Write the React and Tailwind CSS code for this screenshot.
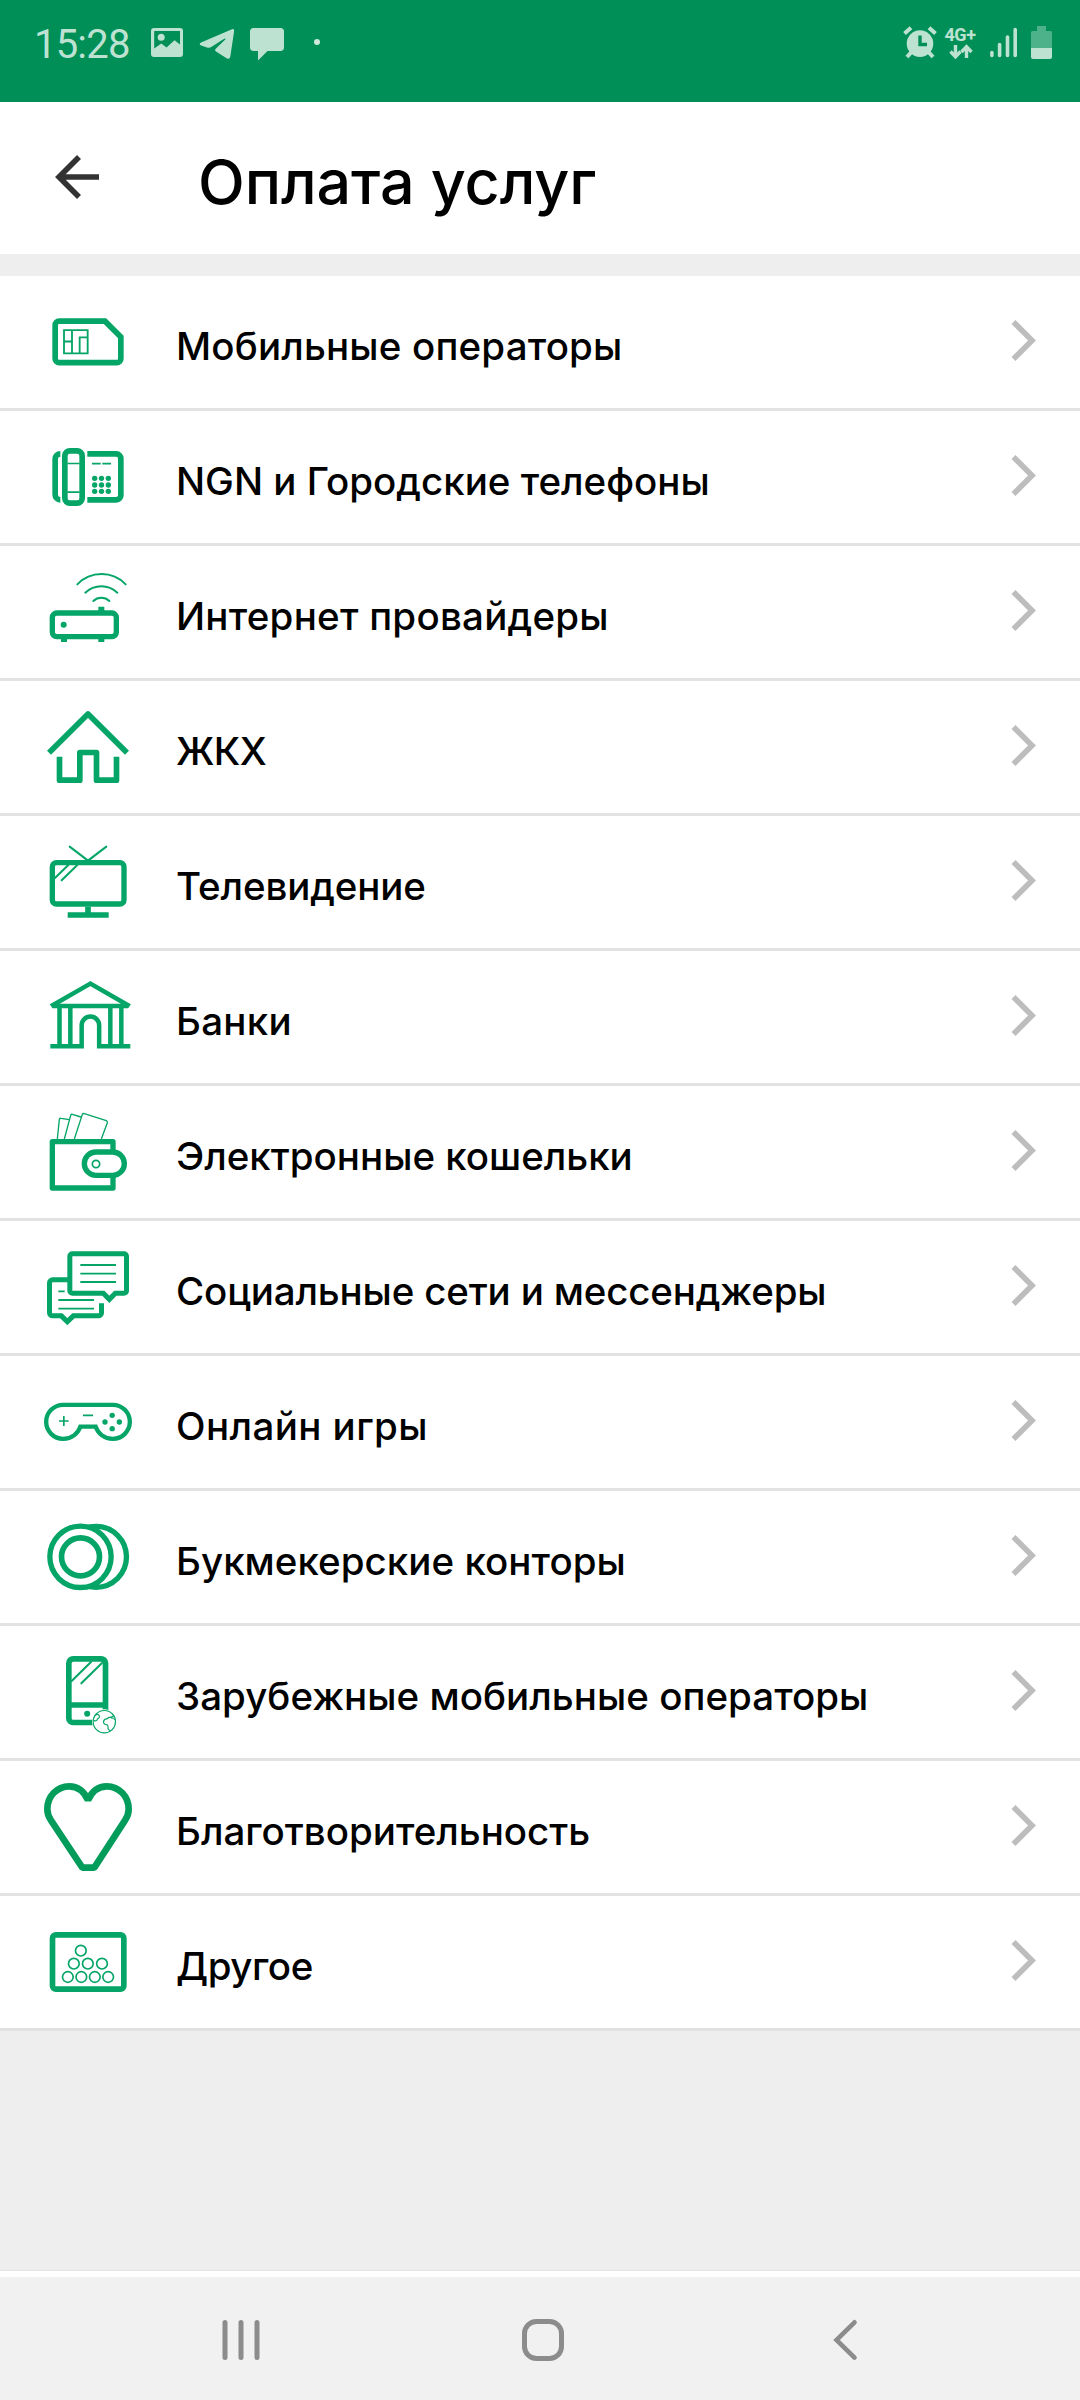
const GREEN = "#04a566";

const services = [
  { label: "Мобильные операторы", Icon: SimIcon, tracking: "tracking-[0.17px]" },
  { label: "NGN и Городские телефоны", Icon: PhoneIcon },
  { label: "Интернет провайдеры", Icon: RouterIcon, tracking: "tracking-[0.24px]" },
  { label: "ЖКХ", Icon: HouseIcon, tracking: "tracking-[-0.5px]" },
  { label: "Телевидение", Icon: TvIcon, tracking: "tracking-[-0.12px]" },
  { label: "Банки", Icon: BankIcon, tracking: "tracking-[0.3px]" },
  { label: "Электронные кошельки", Icon: WalletIcon },
  { label: "Социальные сети и мессенджеры", Icon: ChatsIcon, tracking: "tracking-[-0.16px]" },
  { label: "Онлайн игры", Icon: GamepadIcon, tracking: "tracking-[0.42px]" },
  { label: "Букмекерские конторы", Icon: CoinsIcon, tracking: "tracking-[0.05px]" },
  { label: "Зарубежные мобильные операторы", Icon: MobileGlobeIcon, tracking: "tracking-[0.03px]" },
  { label: "Благотворительность", Icon: HeartIcon },
  { label: "Другое", Icon: OtherIcon, tracking: "tracking-[-0.45px]" },
];

export default function App() {
  return (
    <div className="w-[1080px] h-[2400px] flex flex-col bg-[#eeeeee] font-['Inter',sans-serif] text-black overflow-hidden">
      <StatusBar />
      <Header title="Оплата услуг" />

      <main className="flex-1 pt-[22px] border-b border-[#e2e2e2]">
        {services.map(({ label, Icon, tracking }) => (
          <ServiceRow key={label} label={label} Icon={Icon} tracking={tracking} />
        ))}
      </main>

      <NavBar />
    </div>
  );
}

function Header({ title }) {
  return (
    <header className="h-[152px] shrink-0 bg-white flex items-center pl-[54px]">
      <svg width="46" height="46" viewBox="0 0 46 46" className="shrink-0 -mt-[3px]" fill="none" stroke="#333333" strokeWidth="5.6">
        <path d="M25 3 L5 23 L25 43 M5 23 H45" />
      </svg>
      <h1 className="ml-[98px] mt-[9px] text-[61px] leading-none font-medium tracking-[-0.1px] whitespace-nowrap">
        {title}
      </h1>
    </header>
  );
}

function ServiceRow({ label, Icon, tracking = "tracking-normal" }) {
  return (
    <div className="h-[135px] bg-white border-b-3 border-[#e2e2e2] flex items-center pl-11 pr-[43px]">
      <Icon />
      <span className={`ml-11 mt-[9px] text-[38.5px] leading-none font-medium whitespace-nowrap ${tracking}`}>
        {label}
      </span>
      <svg width="26" height="42" viewBox="0 0 26 42" className="ml-auto -mt-[3px]" fill="none" stroke="#bdbdbd" strokeWidth="5.6">
        <path d="M2.5 2 L21 20.5 L2.5 39" />
      </svg>
    </div>
  );
}

/* ---------- System bars ---------- */

function StatusBar() {
  return (
    <div className="h-[102px] shrink-0 bg-[#008f57] text-[#bde2d2] flex items-start pt-[26px] pl-[34px] pr-7">
      <span className="w-[117px] mt-[-1px] font-['Roboto',sans-serif] text-[40px] leading-[40px] tracking-[-0.8px]">
        15:28
      </span>

      <svg width="32" height="34" viewBox="0 0 32 34" fill="currentColor">
        <path
          fillRule="evenodd"
          d="M3 2 H29 A3 3 0 0 1 32 5 V28 A3 3 0 0 1 29 31 H3 A3 3 0 0 1 0 28 V5 A3 3 0 0 1 3 2 Z M3.2 5 V22.5 L10.3 17.5 L15.5 21.5 L23.5 14.3 L29 18.5 V5 Z"
        />
        <circle cx="10.2" cy="11.2" r="3.5" />
      </svg>
      <svg width="35" height="35" viewBox="0 0 35 35" className="ml-4" fill="currentColor">
        <path d="M33 3.2 Q35.3 2.4 35.2 4.8 L31.3 30.5 Q30.6 34 27.6 32.2 L17 25.6 Q15.4 24.4 16.7 22.8 L26.5 13.3 Q26.8 12 25.2 12.8 L12.6 20.8 Q10.5 22.2 8 21.4 L2.2 19.6 Q-0.6 18.5 2 16.6 Z" />
      </svg>
      <svg width="34" height="36" viewBox="0 0 34 36" className="ml-4" fill="currentColor">
        <path d="M3.5 2 H30.5 A3.3 3.3 0 0 1 34 5.5 V21.5 A3.3 3.3 0 0 1 30.5 25 H17.5 L8 34.5 V25 H3.5 A3.3 3.3 0 0 1 0 21.5 V5.5 A3.3 3.3 0 0 1 3.5 2 Z" />
      </svg>
      <span className="ml-[30px] mt-[13px] size-[6px] rounded-full bg-[#cdeadd]" />

      <svg width="34" height="34" viewBox="0 0 34 34" className="ml-auto" fill="none" stroke="currentColor">
        <circle cx="17" cy="17.6" r="13.3" fill="currentColor" stroke="none" />
        <path d="M1.5 7.5 L8 1.8 M32.5 7.5 L26 1.8" strokeWidth="4" />
        <path d="M8.5 26 L4 31 M25.5 26 L30 31" strokeWidth="4" />
        <path d="M17 9.5 V18.5 H24" stroke="#008f57" strokeWidth="3.4" />
      </svg>
      <div className="ml-[7px] mr-px w-8 flex flex-col items-center">
        <span className="mt-px font-['Roboto',sans-serif] text-[18px] leading-[15px] font-bold tracking-[-0.4px]">4G+</span>
        <svg width="24" height="16" viewBox="0 0 24 16" className="mt-[2px] ml-px" fill="none" stroke="currentColor" strokeWidth="3.4">
          <path d="M6.5 1 V12 M1.5 7.5 L6.5 12.8 L11.5 7.5" />
          <path d="M17.5 14 V3 M12.5 8 L17.5 2.7 L22.5 8" />
        </svg>
      </div>
      <svg width="27" height="34" viewBox="0 0 27 34" className="ml-[13px]" stroke="currentColor" strokeWidth="3.6" strokeLinecap="round">
        <path d="M1.9 26.5 V29.5 M9.6 18.5 V29.5 M17.5 11 V29.5 M25.2 3.5 V29.5" />
      </svg>
      <svg width="21" height="34" viewBox="0 0 21 34" className="ml-[14px]">
        <path d="M6 0 H15 V5 H19.5 A1.5 1.5 0 0 1 21 6.5 V22 H0 V6.5 A1.5 1.5 0 0 1 1.5 5 H6 Z" fill="#4db28a" />
        <path d="M0 22 H21 V31 A2 2 0 0 1 19 33 H2 A2 2 0 0 1 0 31 Z" fill="currentColor" />
      </svg>
    </div>
  );
}

function NavBar() {
  return (
    <nav className="h-[129px] shrink-0 border-t-6 border-white bg-[#f1f1f1] flex items-center pl-[222px] text-[#8c8c8c]">
      <svg width="38" height="42" viewBox="0 0 38 42" className="mt-[3px]" stroke="currentColor" strokeWidth="5" strokeLinecap="round">
        <path d="M3 3.5 V38.5 M19 3.5 V38.5 M35 3.5 V38.5" />
      </svg>
      <svg width="42" height="42" viewBox="0 0 42 42" className="mt-[3px] ml-[262px]" fill="none" stroke="currentColor" strokeWidth="5">
        <rect x="2.5" y="2.5" width="37" height="37" rx="12" />
      </svg>
      <svg width="25" height="42" viewBox="0 0 25 42" className="mt-[3px] ml-[269px]" fill="none" stroke="currentColor" strokeWidth="4.6" strokeLinecap="round">
        <path d="M21.5 3.3 L3.5 21 L21.5 38.7" />
      </svg>
    </nav>
  );
}

/* ---------- Service icons ---------- */

function IconBase({ color = GREEN, children }) {
  return (
    <svg width="88" height="88" viewBox="0 0 264 264" className="shrink-0" fill="none" stroke={color} strokeWidth="16">
      {children}
    </svg>
  );
}

function SimIcon() {
  return (
    <IconBase>
      <path strokeWidth="17" d="M46 69.5 H183 L230.5 117 V182 A12 12 0 0 1 218.5 194 H46 A12 12 0 0 1 33.5 182 V82 A12 12 0 0 1 46 69.5 Z" />
      <path strokeWidth="5.5" d="M60 96.5 H131 V166 H60 Z M84 96.5 V166 M60 130.5 H84 M131 118 H107 V166" />
    </IconBase>
  );
}

function PhoneIcon() {
  return (
    <IconBase>
      <g strokeWidth="17">
        <path d="M49 62.5 A15.5 15.5 0 0 0 33.5 78 V185 A15.5 15.5 0 0 0 49 200.5" />
        <rect x="62.5" y="53.5" width="52" height="157" rx="15" />
        <path d="M130 62.5 H217 A14 14 0 0 1 230.5 76 V187 A14 14 0 0 1 217 200.5 H130" />
      </g>
      <path strokeWidth="5" d="M70 91.5 H107 M70 177.5 H107 M144 92 H170 M175 92 H201" />
      <g fill={GREEN} stroke="none">
        {[136, 156, 175].map((y) =>
          [152, 172.5, 193].map((x) => <circle key={`${x}-${y}`} cx={x} cy={y} r="8" />)
        )}
      </g>
    </IconBase>
  );
}

function RouterIcon() {
  return (
    <IconBase>
      <rect x="25" y="135" width="192" height="71" rx="13" />
      <circle cx="59" cy="170" r="9" fill={GREEN} stroke="none" />
      <path strokeWidth="18" d="M172 116 V132 M60 208 V222 M172 208 V222" />
      <path
        strokeWidth="6"
        strokeLinecap="round"
        d="M148 99 A35 35 0 0 1 196 99 M124 74 A69 69 0 0 1 220 74 M100 49 A101 101 0 0 1 245 49"
      />
    </IconBase>
  );
}

function HouseIcon() {
  return (
    <IconBase>
      <path strokeWidth="17" strokeLinejoin="round" d="M15 149 L132 33 L249 149" />
      <path strokeWidth="17" strokeLinejoin="round" d="M46.5 161 V231.5 H107.5 V148.5 H157.5 V231.5 H217.5 V161" />
    </IconBase>
  );
}

function TvIcon() {
  return (
    <IconBase>
      <rect x="25" y="74" width="215" height="124" rx="12" />
      <path strokeWidth="6" strokeLinecap="round" d="M77 26 L132 68 L187 26" />
      <path strokeWidth="6" strokeLinecap="round" d="M73 81 L32 121 M100 81 L53 127" />
      <path strokeWidth="17" d="M132 206 V224 M71 231 H194" />
    </IconBase>
  );
}

function BankIcon() {
  return (
    <IconBase>
      <g strokeWidth="13.5">
        <path d="M139 32 L27 96 L29 99 H249 L251 96 Z" />
        <path d="M46.5 105 V213 M79 105 V213 M199 105 V213 M232 105 V213" />
        <path d="M19 219.5 H113 V157 A26.2 26.2 0 0 1 165.5 157 V219.5 H259" />
      </g>
    </IconBase>
  );
}

function WalletIcon() {
  return (
    <IconBase>
      <path strokeLinejoin="round" d="M207 128 V101 H25 V240 H207 V206" />
      <rect x="121" y="132" width="120" height="70" rx="35" />
      <circle cx="156" cy="168" r="11" strokeWidth="5" />
      <path
        strokeWidth="4"
        strokeLinejoin="round"
        d="M40 93 L46 34 Q47 30 51 31 L76 35 M61 93 L80 22 Q81 18 85 19 L111 27 M91 93 L115 19 Q117 15 121 17 L187 38 Q191 40 190 44 L172 93"
      />
    </IconBase>
  );
}

function ChatsIcon() {
  return (
    <IconBase>
      <g strokeWidth="15">
        <path d="M85 32.5 H240 A7.5 7.5 0 0 1 247.5 40 V143 A7.5 7.5 0 0 1 240 150.5 H214 L196 169 L178 150.5 H85 A7.5 7.5 0 0 1 77.5 143 V40 A7.5 7.5 0 0 1 85 32.5 Z" />
        <path d="M72 110.5 H26 A9.5 9.5 0 0 0 16.5 120 V209 A9.5 9.5 0 0 0 26 218.5 H52 L70 236 L88 218.5 H163 A9.5 9.5 0 0 0 172.5 209 V181" />
      </g>
      <path strokeWidth="5.5" d="M109 66 H216 M109 92 H216 M109 117 H216 M43 145 H62 M43 171 H150 M43 197 H150" />
    </IconBase>
  );
}

function GamepadIcon() {
  return (
    <IconBase>
      <path
        strokeWidth="13"
        d="M57.5 80.5 H206.5 A51 51 0 0 1 206.5 182.5 C181 182.5 162 167 155 146 H109 C102 167 83 182.5 57.5 182.5 A51 51 0 0 1 57.5 80.5 Z"
      />
      <path strokeWidth="5" d="M45 129 H74 M59.5 114 V144 M117 112 H147" />
      <g fill={GREEN} stroke="none">
        <circle cx="204.5" cy="112" r="8" />
        <circle cx="183" cy="132" r="8" />
        <circle cx="226" cy="132" r="8" />
        <circle cx="204.5" cy="152" r="8" />
      </g>
    </IconBase>
  );
}

function CoinsIcon() {
  return (
    <IconBase>
      <circle cx="156" cy="131.5" r="91.5" />
      <circle cx="109.5" cy="131.5" r="92" fill="white" />
      <circle cx="109.5" cy="131.5" r="57" strokeWidth="17" />
    </IconBase>
  );
}

function MobileGlobeIcon() {
  return (
    <IconBase>
      <rect x="74.5" y="32.5" width="110" height="191" rx="13" strokeWidth="17" />
      <path strokeWidth="17" d="M75 171 H184" />
      <circle cx="129.5" cy="197" r="9" fill={GREEN} stroke="none" />
      <path strokeWidth="6" strokeLinecap="round" d="M141 42 L83 99 M174 45 L112 106" />
      <circle cx="181" cy="221" r="37" fill="white" stroke="none" />
      <g strokeWidth="3.5">
        <circle cx="181" cy="221" r="33.5" />
        <path d="M154 202 Q157 198 163 200 Q168 203 166 208 L160 213 Q160 220 149 218" />
        <path d="M209 205 Q200 208 193 209 Q190 214 184 213 Q177 218 179 225 Q182 231 189 230 Q194 234 192 242 L197 248 M213 215 Q205 208 201 211" />
      </g>
    </IconBase>
  );
}

function HeartIcon() {
  return (
    <IconBase color="#049c5a">
      <path
        strokeWidth="20"
        strokeLinejoin="bevel"
        d="M132 51 C122 29 103 10 76 10 C38 10 10 41 10 78 C10 91 14 102 21 112 L115 254 H151 L243 112 C250 102 254 91 254 78 C254 41 226 10 188 10 C161 10 142 29 132 51 Z"
      />
    </IconBase>
  );
}

function OtherIcon() {
  return (
    <IconBase>
      <rect x="25.5" y="50.5" width="214" height="163" rx="10" strokeWidth="17" />
      <g strokeWidth="5">
        <circle cx="110.5" cy="98" r="16" />
        {[89.5, 131.5, 174].map((x) => (
          <circle key={x} cx={x} cy="137" r="16" />
        ))}
        {[71.5, 112, 152.5, 192.5].map((x) => (
          <circle key={x} cx={x} cy="177" r="16" />
        ))}
      </g>
    </IconBase>
  );
}
